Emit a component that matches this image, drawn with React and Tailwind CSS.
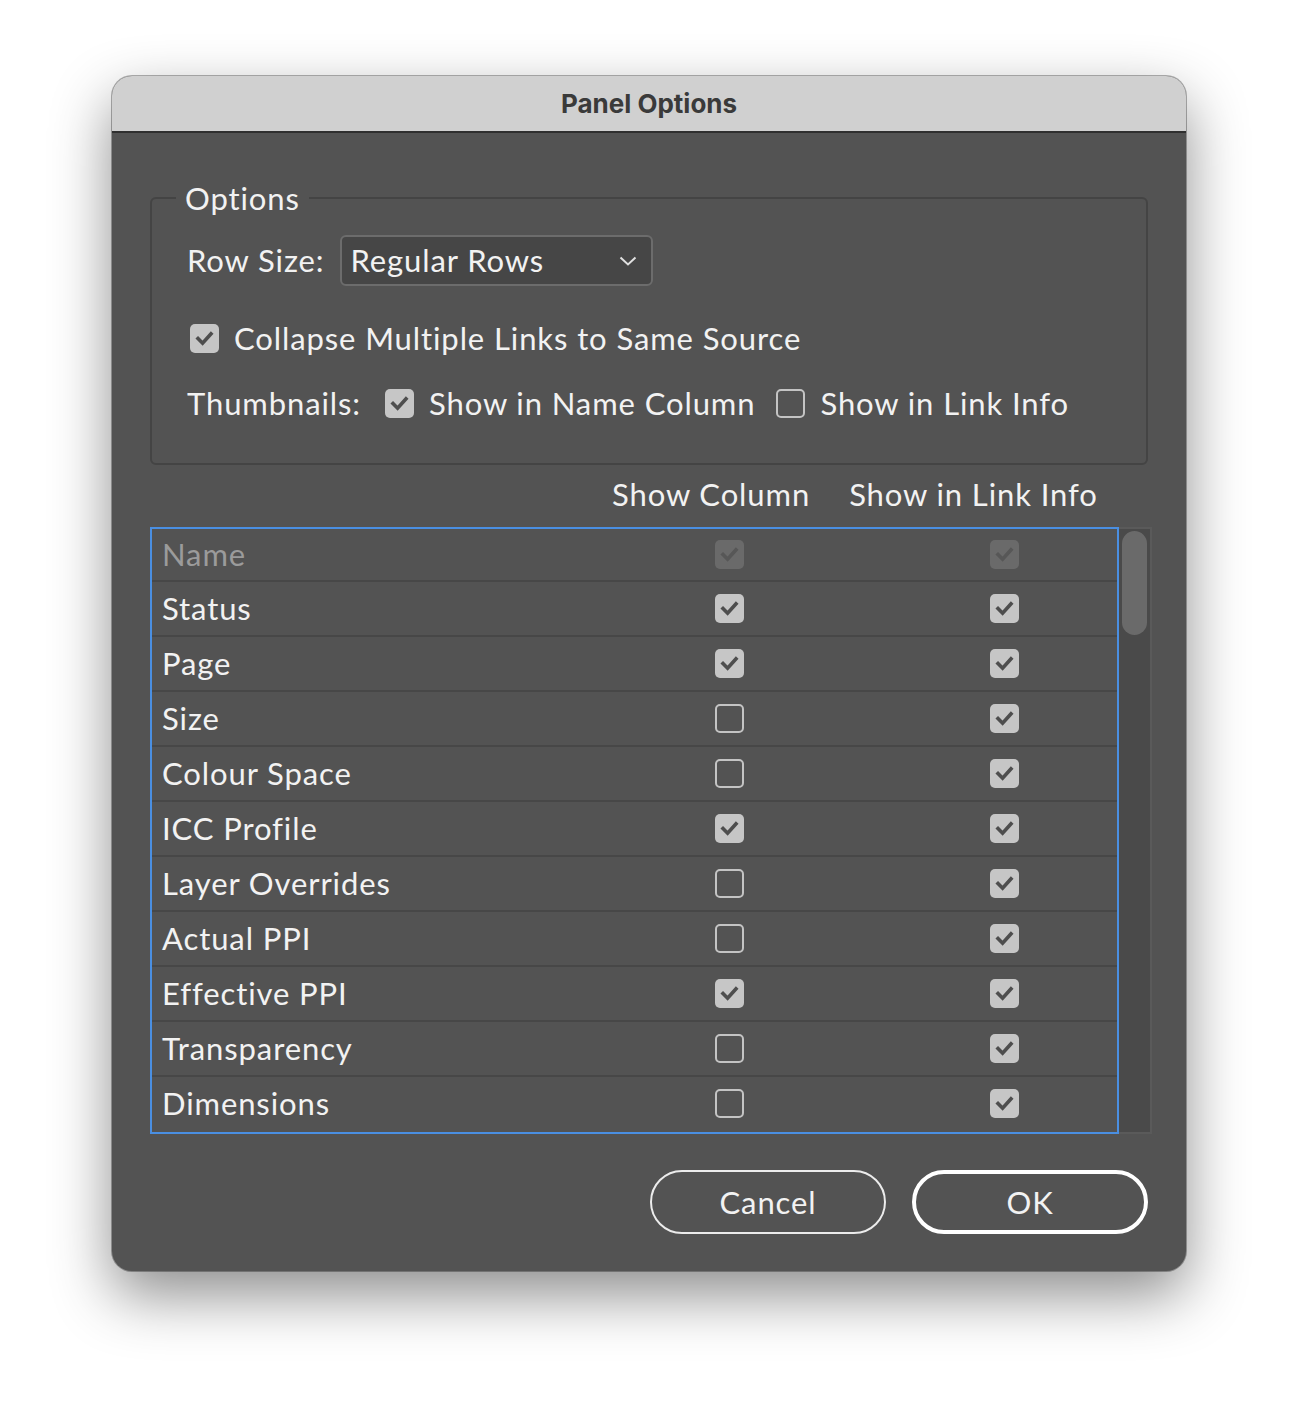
import React from "react";

const rows = [
  { name: "Name", col: true, info: true, disabled: true },
  { name: "Status", col: true, info: true },
  { name: "Page", col: true, info: true },
  { name: "Size", col: false, info: true },
  { name: "Colour Space", col: false, info: true },
  { name: "ICC Profile", col: true, info: true },
  { name: "Layer Overrides", col: false, info: true },
  { name: "Actual PPI", col: false, info: true },
  { name: "Effective PPI", col: true, info: true },
  { name: "Transparency", col: false, info: true },
  { name: "Dimensions", col: false, info: true },
];

const Checkbox = ({ checked, disabled, className = "" }) => {
  if (!checked) {
    return (
      <span
        className={`block w-[29px] h-[29px] shrink-0 rounded-[5px] border-2 border-[#c4c4c4] ${className}`}
      />
    );
  }
  return (
    <span
      className={`flex items-center justify-center w-[29px] h-[29px] shrink-0 rounded-[5px] ${
        disabled ? "bg-[#6a6a6a]" : "bg-[#c6c6c6]"
      } ${className}`}
    >
      <svg width="29" height="29" viewBox="0 0 29 29">
        <path
          d="M8 14.5 L12.6 19.2 L21 9.8"
          fill="none"
          stroke={disabled ? "#575757" : "#4e4e4e"}
          strokeWidth="3.6"
          strokeLinecap="square"
          strokeLinejoin="miter"
        />
      </svg>
    </span>
  );
};

const App = () => {
  return (
    <div
      className="min-h-[1420px] bg-white flex justify-center pt-[76px]"
      style={{ fontFamily: "Lato, 'Noto Sans', sans-serif" }}
    >
      <div className="w-[1074px] h-[1195px] rounded-[20px] overflow-hidden bg-[#535353] shadow-[0_24px_60px_rgba(0,0,0,0.45)] ring-1 ring-black/30 flex flex-col">
        {/* Title bar */}
        <div className="h-[57px] shrink-0 bg-[#d0d0d0] border-b-2 border-[#2f2f2f] flex items-center justify-center">
          <span
            className="text-[26px] font-bold text-[#3a3a3a]"
            style={{ fontFamily: "Inter, 'Liberation Sans', sans-serif" }}
          >
            Panel Options
          </span>
        </div>

        <div className="flex-1 px-[38px] flex flex-col text-[31px] tracking-[0.9px] text-[#f2f2f2]">
          {/* Options group */}
          <fieldset className="mt-[47px] border-2 border-[#444444] rounded-[6px] pl-[35px] pb-[42px]">
            <legend className="-ml-[11px] px-[9px] leading-[36px]">Options</legend>

            <div className="mt-[19px] flex items-center h-[51px]">
              <span>Row Size:</span>
              <div className="ml-[16px] w-[313px] h-[51px] rounded-[6px] border-2 border-[#6c6c6c] bg-[#464646] flex items-center justify-between pl-[8px] pr-[14px]">
                <span>Regular Rows</span>
                <svg width="18" height="10" viewBox="0 0 18 10">
                  <path d="M1.5 1.5 L9 8.5 L16.5 1.5" fill="none" stroke="#e0e0e0" strokeWidth="2" />
                </svg>
              </div>
            </div>

            <div className="mt-[34px] flex items-center h-[36px]">
              <Checkbox checked className="ml-[3px]" />
              <span className="ml-[15px]">Collapse Multiple Links to Same Source</span>
            </div>

            <div className="mt-[29px] flex items-center h-[36px]">
              <span>Thumbnails:</span>
              <Checkbox checked className="ml-[24px]" />
              <span className="ml-[15px]">Show in Name Column</span>
              <Checkbox checked={false} className="ml-[21px]" />
              <span className="ml-[15px]">Show in Link Info</span>
            </div>
          </fieldset>

          {/* Column headers */}
          <div className="mt-[11px] h-[36px] flex items-center">
            <span className="ml-[462px]">Show Column</span>
            <span className="ml-[39px]">Show in Link Info</span>
          </div>

          {/* List */}
          <div className="mt-[15px] -mr-[4px] flex h-[607px]">
            <div className="flex-1 border-2 border-[#4a8fe2] flex flex-col">
              {rows.map((row, i) => (
                <div
                  key={row.name}
                  className={`flex items-center ${
                    i === 0 ? "h-[51px]" : "h-[55px] border-t-2 border-[#474747]"
                  }`}
                >
                  <span
                    className={`w-[563px] pl-[10px] ${row.disabled ? "text-[#9b9b9b]" : ""}`}
                  >
                    {row.name}
                  </span>
                  <Checkbox checked={row.col} disabled={row.disabled} />
                  <Checkbox checked={row.info} disabled={row.disabled} className="ml-[246px]" />
                </div>
              ))}
            </div>
            <div className="w-[33px] bg-[#4a4a4a] border-2 border-l-0 border-[#5a5a5a] pt-[2px] flex justify-center">
              <div className="w-[25px] h-[104px] rounded-full bg-[#6a6a6a]" />
            </div>
          </div>

          {/* Buttons */}
          <div className="mt-[36px] flex justify-end gap-[26px]">
            <button className="w-[236px] h-[64px] rounded-full border-2 border-[#ececec] flex items-center justify-center">
              Cancel
            </button>
            <button className="w-[236px] h-[64px] rounded-full border-4 border-white flex items-center justify-center">
              OK
            </button>
          </div>
        </div>
      </div>
    </div>
  );
};

export default App;
